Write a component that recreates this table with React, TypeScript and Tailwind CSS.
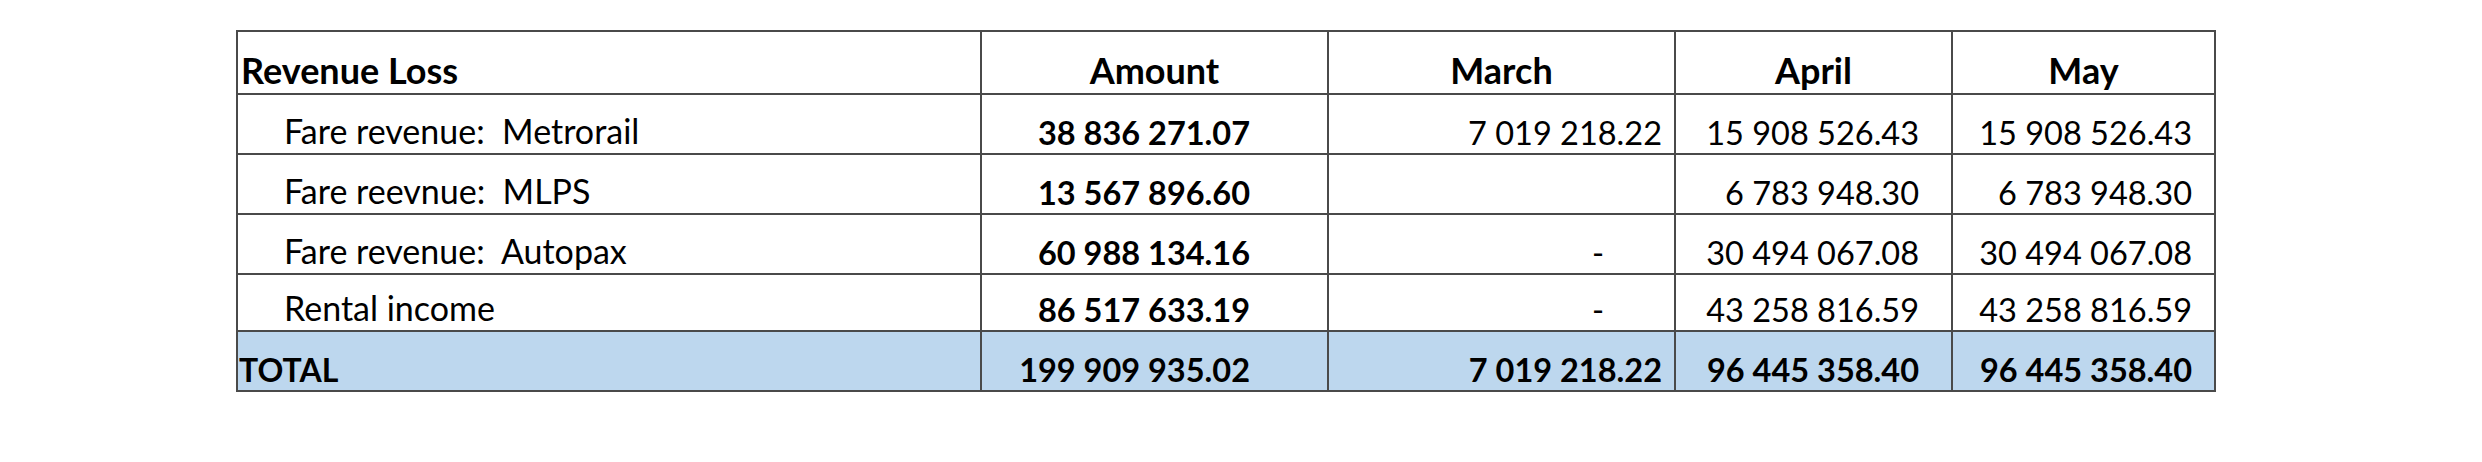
import React from "react";

const rows = [
  { label: "Fare revenue:  Metrorail", amount: "38 836 271.07", march: "7 019 218.22", april: "15 908 526.43", may: "15 908 526.43", h: "h-[60px]" },
  { label: "Fare reevnue:  MLPS", amount: "13 567 896.60", march: "", april: "6 783 948.30", may: "6 783 948.30", h: "h-[60px]" },
  { label: "Fare revenue:  Autopax", amount: "60 988 134.16", march: "-", april: "30 494 067.08", may: "30 494 067.08", h: "h-[60px]" },
  { label: "Rental income", amount: "86 517 633.19", march: "-", april: "43 258 816.59", may: "43 258 816.59", h: "h-[57px]" },
];

export default function App() {
  const cell = "border-2 border-[#4a4a4a] align-bottom pb-[1px] leading-[1.2]";
  const num = "text-[32.5px]";
  return (
    <div className="w-[2482px] h-[462px] bg-white pt-[30px] pl-[236px]" style={{ fontFamily: "Lato, sans-serif" }}>
      <table className="border-collapse text-black">
        <colgroup>
          <col className="w-[744px]" />
          <col className="w-[347px]" />
          <col className="w-[347px]" />
          <col className="w-[277px]" />
          <col className="w-[263px]" />
        </colgroup>
        <tbody>
          <tr className="h-[63px] text-[36px] font-bold">
            <td className={`${cell} pl-[3px] text-left`}>Revenue Loss</td>
            <td className={`${cell} text-center`}>Amount</td>
            <td className={`${cell} text-center`}>March</td>
            <td className={`${cell} text-center`}>April</td>
            <td className={`${cell} text-center`}>May</td>
          </tr>
          {rows.map((r, i) => (
            <tr key={i} className={r.h}>
              <td className={`${cell} pl-[46px] text-left text-[34px] whitespace-pre`}>{r.label}</td>
              <td className={`${cell} ${num} pr-[77px] font-bold text-right`}>{r.amount}</td>
              <td className={`${cell} ${num} ${r.march === "-" ? "pr-[70px]" : "pr-[12px]"} text-right`}>{r.march}</td>
              <td className={`${cell} ${num} pr-[32px] text-right`}>{r.april}</td>
              <td className={`${cell} ${num} pr-[22px] text-right`}>{r.may}</td>
            </tr>
          ))}
          <tr className="h-[60px] bg-[#bdd7ee] font-bold">
            <td className={`${cell} pl-[1px] text-left text-[32px]`}>TOTAL</td>
            <td className={`${cell} ${num} pr-[77px] text-right`}>199 909 935.02</td>
            <td className={`${cell} ${num} pr-[12px] text-right`}>7 019 218.22</td>
            <td className={`${cell} ${num} pr-[32px] text-right`}>96 445 358.40</td>
            <td className={`${cell} ${num} pr-[22px] text-right`}>96 445 358.40</td>
          </tr>
        </tbody>
      </table>
    </div>
  );
}
